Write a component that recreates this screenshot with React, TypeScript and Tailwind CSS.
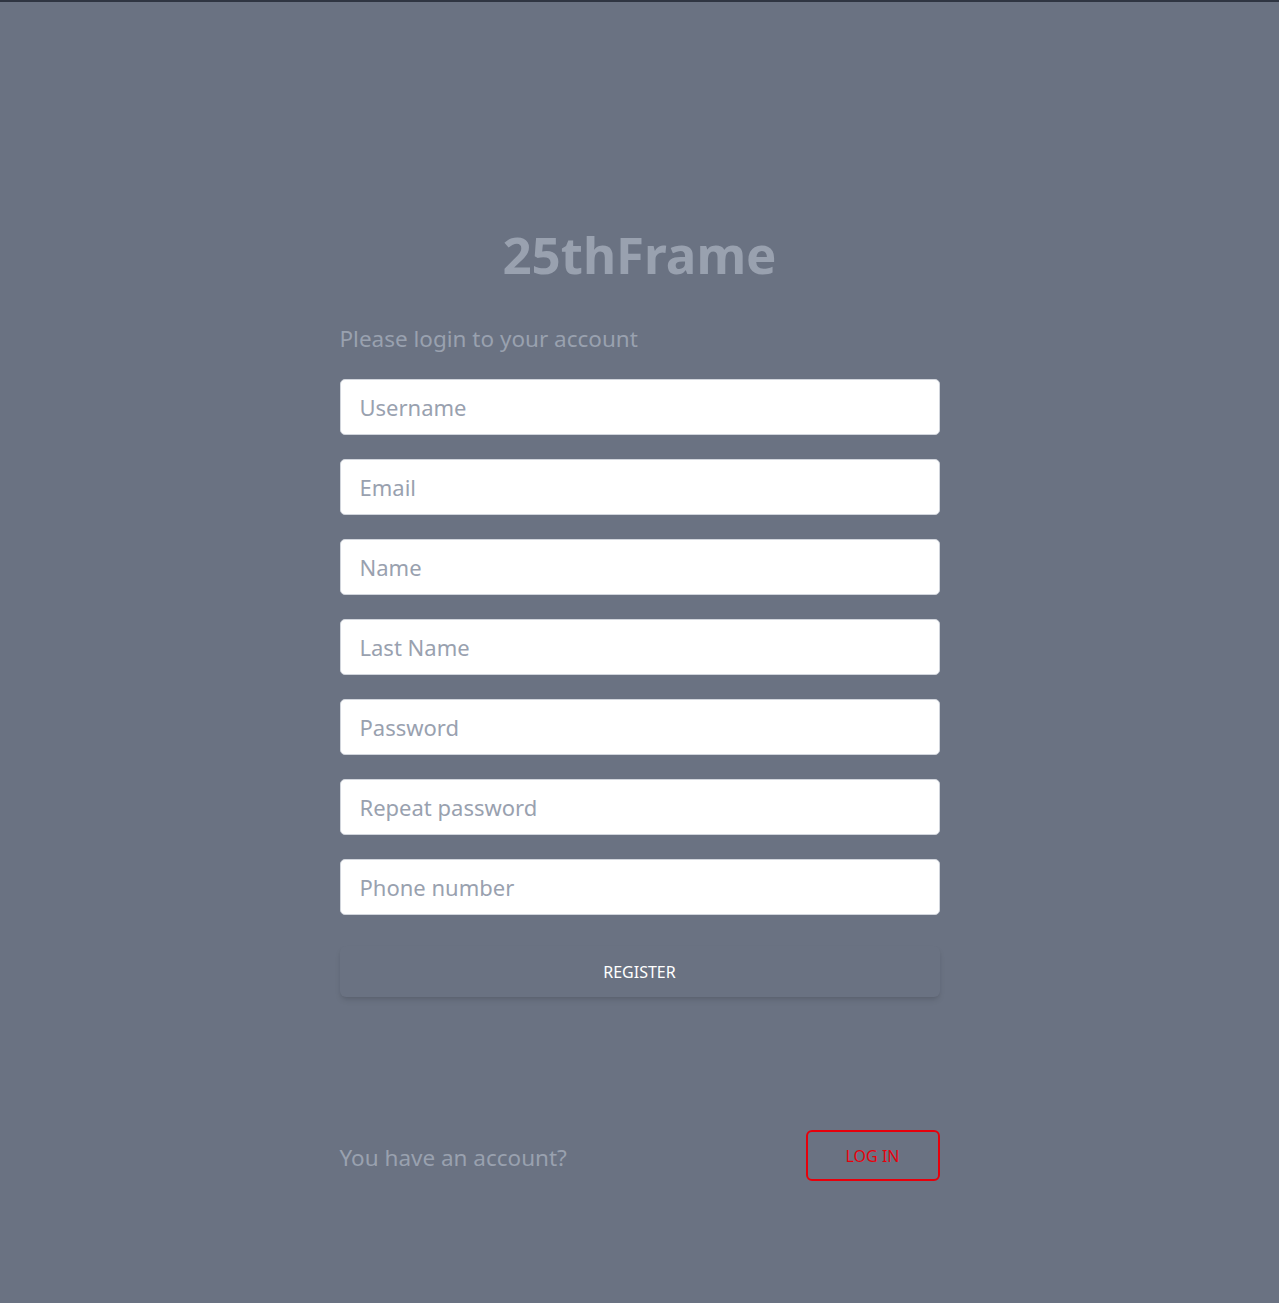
export default function App() {
  const fields = [
    "Username",
    "Email",
    "Name",
    "Last Name",
    "Password",
    "Repeat password",
    "Phone number",
  ];

  return (
    <div className="min-h-[1303px] border-t-2 border-[#2f3542] bg-gray-500 font-['Noto_Sans',sans-serif]">
      <div className="mx-auto w-[600px] pt-[220px]">
        <h1 className="text-center text-[51px] font-bold leading-[64px] text-gray-400">
          25thFrame
        </h1>
        <p className="mt-[38px] text-[22.5px] leading-[30px] text-gray-400">
          Please login to your account
        </p>
        <form className="mt-[25px] flex flex-col gap-6" onSubmit={(e) => e.preventDefault()}>
          {fields.map((f) => (
            <input
              key={f}
              type={f.toLowerCase().includes("password") ? "password" : "text"}
              placeholder={f}
              className="h-14 w-full rounded-[5px] border border-gray-300 bg-white px-[19px] text-[22px] text-gray-700 placeholder:text-gray-400 focus:outline-none"
            />
          ))}
          <button
            type="submit"
            className="mt-[7px] h-[51px] w-full rounded-md bg-gray-500 text-base uppercase text-white shadow-md"
          >
            Register
          </button>
        </form>
        <div className="mt-[133px] flex items-center justify-between">
          <span className="mt-[5px] text-[22.5px] text-gray-400">You have an account?</span>
          <button className="h-[51px] w-[134px] rounded-md border-2 border-red-600 text-base uppercase text-red-600">
            Log in
          </button>
        </div>
      </div>
    </div>
  );
}
